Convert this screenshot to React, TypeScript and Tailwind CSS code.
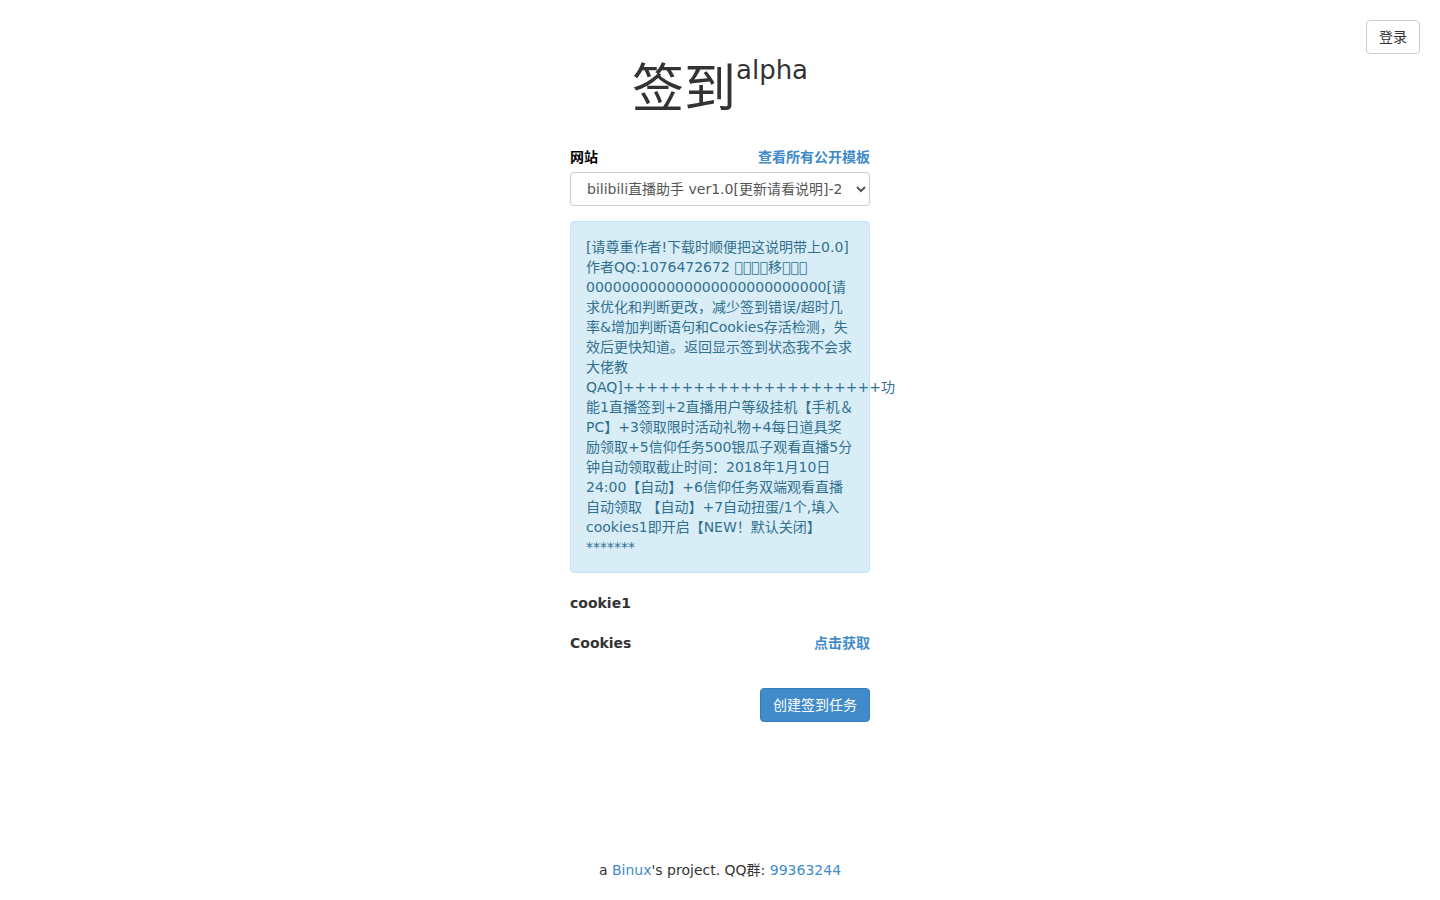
import React from "react";

const FONT = { fontFamily: '"DejaVu Sans", "Noto Sans CJK SC", sans-serif' };

const desc =
  "[请尊重作者!下载时顺便把这说明带上0.0]作者QQ:1076472672 \uE001\uE002\uE003\uE004移\uE005\uE006\uE007 " +
  "0".repeat(27) +
  "[请求优化和判断更改，减少签到错误/超时几率&增加判断语句和Cookies存活检测，失效后更快知道。返回显示签到状态我不会求大佬教 QAQ]" +
  "+".repeat(22) +
  "功能1直播签到+2直播用户等级挂机【手机＆PC】+3领取限时活动礼物+4每日道具奖励领取+5信仰任务500银瓜子观看直播5分钟自动领取截止时间：2018年1月10日 24:00【自动】+6信仰任务双端观看直播自动领取 【自动】+7自动扭蛋/1个,填入cookies1即开启【NEW！默认关闭】 *******";

export default function App() {
  return (
    <div className="min-h-[900px] bg-white text-[14px] leading-[20px] text-[#333333] relative" style={FONT}>
      <button className="absolute right-[20px] top-[20px] h-[34px] px-[12px] border border-[#cccccc] rounded-[4px] bg-white text-[14px] text-[#333333]">
        登录
      </button>
      <div className="flex flex-col items-center">
        <div className="w-[300px] pt-[54px]">
          <h1 className="text-center text-[52px] leading-[70px] font-normal text-[#333333] mb-[23px]">
            签到<sup className="text-[26px] align-baseline relative top-[-28px]">alpha</sup>
          </h1>
          <div className="mb-[15px]">
            <div className="flex justify-between mb-[5px] font-bold">
              <span className="text-black">网站</span>
              <a className="text-[#428bca]">查看所有公开模板</a>
            </div>
            <select
              className="w-full h-[34px] border border-[#cccccc] rounded-[4px] px-[12px] text-[14px] text-[#555555] bg-white"
              style={FONT}
              defaultValue="a"
            >
              <option value="a">bilibili直播助手 ver1.0[更新请看说明]-2</option>
            </select>
          </div>
          <div className="mb-[20px] p-[15px] bg-[#d9edf7] border border-[#bce8f1] rounded-[4px] text-[#31708f]">
            {desc}
          </div>
          <div className="mb-[20px] font-bold">cookie1</div>
          <div className="mb-[35px] flex justify-between font-bold">
            <span>Cookies</span>
            <a className="text-[#428bca]">点击获取</a>
          </div>
          <div className="flex justify-end">
            <button className="h-[34px] px-[12px] bg-[#428bca] border border-[#357ebd] rounded-[4px] text-white text-[14px]">
              创建签到任务
            </button>
          </div>
        </div>
      </div>
      <div className="absolute left-0 right-0 top-[860px] text-center">
        a <a className="text-[#428bca]">Binux</a>'s project. QQ群: <a className="text-[#428bca]">99363244</a>
      </div>
    </div>
  );
}
